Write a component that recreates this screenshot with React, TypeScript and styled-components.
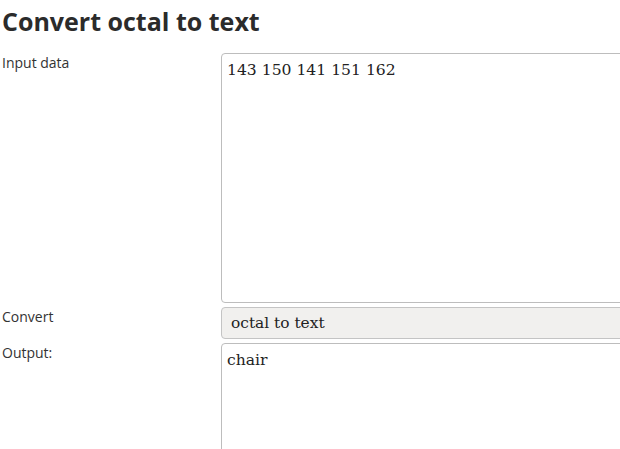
import { createGlobalStyle, styled } from 'styled-components'

const GlobalStyle = createGlobalStyle`
  html, body {
    margin: 0;
    padding: 0;
    background: #ffffff;
    overflow: hidden;
  }
  body {
    font-family: 'Open Sans', 'DejaVu Sans', sans-serif;
    color: #333333;
  }
`

const Page = styled.main`
  padding: 0 2px;
  width: 700px;
  height: 449px;
  overflow: hidden;
`

const Title = styled.h1`
  font-family: 'Open Sans', sans-serif;
  font-weight: 700;
  font-size: 25px;
  line-height: 32px;
  margin: 5px 0 16px;
  color: #2b2b2b;
`

const Form = styled.div`
  display: grid;
  grid-template-columns: 219px 460px;
  row-gap: 4px;
`

const Label = styled.label`
  font-size: 14px;
  line-height: 18px;
  padding-top: 1px;
  color: #333333;
`

const Field = styled.textarea<{ $rows: number }>`
  box-sizing: border-box;
  width: 100%;
  height: ${(p) => p.$rows}px;
  border: 1px solid #bdbdbd;
  border-radius: 4px;
  padding: 6px 5px 5px;
  font-family: 'DejaVu Serif', serif;
  font-size: 15.6px;
  line-height: 20px;
  color: #222222;
  resize: none;
  background: #ffffff;
  outline: none;
`

const Select = styled.div`
  box-sizing: border-box;
  height: 32px;
  border: 1px solid #c4c4c4;
  border-radius: 4px;
  background: #f1f0ee;
  padding: 0 9px;
  display: flex;
  align-items: center;
  font-family: 'DejaVu Serif', serif;
  font-size: 15.4px;
  color: #222222;
`

export default function App() {
  return (
    <>
      <GlobalStyle />
      <Page>
        <Title>Convert octal to text</Title>
        <Form>
          <Label>Input data</Label>
          <Field $rows={250} defaultValue="143 150 141 151 162" />
          <Label>Convert</Label>
          <Select>octal to text</Select>
          <Label>Output:</Label>
          <Field $rows={160} defaultValue="chair" readOnly />
        </Form>
      </Page>
    </>
  )
}
